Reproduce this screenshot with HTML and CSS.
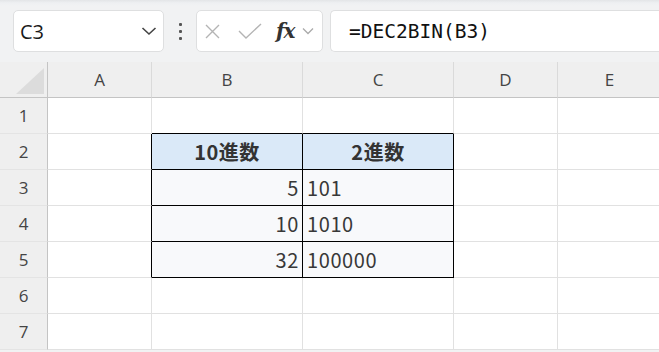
FILE: index.html
```html
<!DOCTYPE html>
<html lang="ja">
<head>
    <meta charset="UTF-8">
    <title>DEC2BIN</title>
    <link rel="stylesheet" href="styles.css">
</head>
<body>
    <!-- Formula bar -->
    <div class="toolbar">
        <div class="name-box">
            <span>C3</span>
            <svg width="16" height="10" viewBox="0 0 16 10"><path d="M1.5 2 L8 8 L14.5 2" fill="none" stroke="#444" stroke-width="1.6"/></svg>
        </div>
        <div class="dots"><i></i><i></i><i></i></div>
        <div class="fx-box">
            <svg class="ic-x" width="15" height="15" viewBox="0 0 15 15"><path d="M1 1 L14 14 M14 1 L1 14" stroke="#b4b4b4" stroke-width="1.4"/></svg>
            <svg class="ic-ok" width="24" height="16" viewBox="0 0 24 16"><path d="M1 8 L8 15 L23 1" fill="none" stroke="#b4b4b4" stroke-width="1.4"/></svg>
            <span class="fx">fx</span>
            <svg class="ic-down" width="12" height="8" viewBox="0 0 12 8"><path d="M1 1.5 L6 6.5 L11 1.5" fill="none" stroke="#aaa" stroke-width="1.3"/></svg>
        </div>
        <div class="formula">=DEC2BIN(B3)</div>
    </div>

    <!-- Sheet grid -->
    <div class="sheet">
        <div class="corner"><div class="tri"></div></div>
        <div class="col-head">A</div>
        <div class="col-head">B</div>
        <div class="col-head">C</div>
        <div class="col-head">D</div>
        <div class="col-head">E</div>

        <div class="row-head">1</div>
        <div class="cell"></div>
        <div class="cell bb"></div>
        <div class="cell bb"></div>
        <div class="cell"></div>
        <div class="cell"></div>

        <div class="row-head">2</div>
        <div class="cell br"></div>
        <div class="cell tbl head">10進数</div>
        <div class="cell tbl head">2進数</div>
        <div class="cell"></div>
        <div class="cell"></div>

        <div class="row-head">3</div>
        <div class="cell br"></div>
        <div class="cell tbl num">5</div>
        <div class="cell tbl txt">101</div>
        <div class="cell"></div>
        <div class="cell"></div>

        <div class="row-head">4</div>
        <div class="cell br"></div>
        <div class="cell tbl num">10</div>
        <div class="cell tbl txt">1010</div>
        <div class="cell"></div>
        <div class="cell"></div>

        <div class="row-head">5</div>
        <div class="cell br"></div>
        <div class="cell tbl num">32</div>
        <div class="cell tbl txt">100000</div>
        <div class="cell"></div>
        <div class="cell"></div>

        <div class="row-head">6</div>
        <div class="cell"></div>
        <div class="cell"></div>
        <div class="cell"></div>
        <div class="cell"></div>
        <div class="cell"></div>

        <div class="row-head">7</div>
        <div class="cell"></div>
        <div class="cell"></div>
        <div class="cell"></div>
        <div class="cell"></div>
        <div class="cell"></div>
    </div>
</body>
</html>
```

FILE: styles.css
```css
/* Base */
body {
    margin: 0;
    width: 659px;
    height: 352px;
    overflow: hidden;
    background-color: #f1f2f3;
    font-family: "Open Sans", "Noto Sans", sans-serif;
    color: #333;
}

/* Formula bar */
.toolbar {
    height: 62px;
    box-sizing: border-box;
    padding: 10px 0 0 13px;
    display: flex;
    align-items: flex-start;
    background: linear-gradient(#e3e5e7 0, #eef0f2 3px, #f1f2f3 6px);
}

.name-box,
.fx-box,
.formula {
    height: 42px;
    box-sizing: border-box;
    background-color: #fff;
    border: 1px solid #dedfe0;
    border-radius: 5px;
    display: flex;
    align-items: center;
}

.name-box {
    width: 151px;
    padding: 0 6px 0 6px;
    justify-content: space-between;
    font-size: 20px;
    color: #1a1a1a;
}

.dots {
    width: 32px;
    height: 42px;
    display: flex;
    flex-direction: column;
    align-items: center;
    justify-content: center;
    gap: 4px;
}

.dots i {
    width: 3px;
    height: 3px;
    background-color: #555;
    border-radius: 1px;
}

.fx-box {
    width: 127px;
    padding: 0 0 0 8px;
}

.ic-ok {
    margin-left: 18px;
}

.fx {
    font-family: "DejaVu Serif", "Liberation Serif", serif;
    font-style: italic;
    font-weight: bold;
    font-size: 20px;
    color: #333;
    margin-left: 14px;
    letter-spacing: -1px;
}

.ic-down {
    margin-left: 7px;
}

.formula {
    flex: 1;
    margin-left: 7px;
    border-right: none;
    border-radius: 5px 0 0 5px;
    padding-left: 18px;
    font-family: "DejaVu Sans Mono", "Liberation Mono", monospace;
    font-size: 19.5px;
    color: #111;
}

/* Sheet */
.sheet {
    display: grid;
    grid-template-columns: 48px 104px 151px 151px 104px 104px;
    grid-auto-rows: 36px;
    background-color: #fff;
}

.corner,
.col-head,
.row-head {
    background-color: #efefef;
    color: #444;
    font-size: 17px;
    display: flex;
    align-items: center;
    justify-content: center;
    box-sizing: border-box;
}

.corner {
    position: relative;
    border-right: 1px solid #c4c4c4;
    border-bottom: 1px solid #c4c4c4;
}

.tri {
    position: absolute;
    right: 3px;
    bottom: 3px;
    width: 28px;
    height: 26px;
    background-color: #dcdcdc;
    clip-path: polygon(100% 0, 100% 100%, 0 100%);
}

.col-head {
    border-right: 1px solid #dadada;
    border-bottom: 1px solid #c4c4c4;
}

.row-head {
    border-right: 1px solid #c4c4c4;
    border-bottom: 1px solid #e4e4e4;
}

.cell {
    box-sizing: border-box;
    border-right: 1px solid #e1e1e1;
    border-bottom: 1px solid #e1e1e1;
    display: flex;
    align-items: center;
    font-family: "Noto Sans CJK JP", sans-serif;
    font-size: 20px;
    letter-spacing: 0.6px;
    color: #383838;
}

.cell.br {
    border-right-color: #000;
}

.cell.bb {
    border-bottom-color: #000;
}

.cell.tbl {
    border-right-color: #000;
    border-bottom-color: #000;
    background-color: #f8f9fb;
}

.cell.head {
    background-color: #dae9f8;
    justify-content: center;
    font-weight: bold;
    font-size: 20px;
    letter-spacing: 0.5px;
    color: #333;
}

.cell.num {
    justify-content: flex-end;
    padding-right: 3px;
}

.cell.txt {
    padding-left: 4px;
}
```
